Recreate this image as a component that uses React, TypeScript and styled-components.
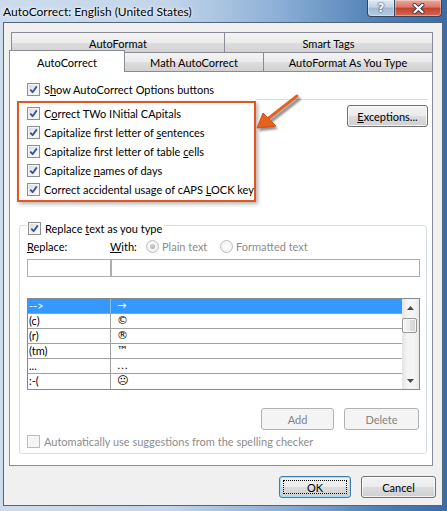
import React from "react";
import styled, { createGlobalStyle } from "styled-components";

const Global = createGlobalStyle`
  html, body { margin: 0; padding: 0; }
  body {
    width: 447px;
    height: 511px;
    overflow: hidden;
    font-family: Lato, "Liberation Sans", sans-serif;
    font-size: 11px;
    color: #000;
  }
`;

const Window = styled.div`
  width: 447px;
  height: 511px;
  box-sizing: border-box;
  display: flex;
  flex-direction: column;
  background: linear-gradient(to right, #cddced 0%, #c2d5ea 38%, #8db0d6 62%, #4d7db3 86%, #3c6ca6 100%);
`;

const TitleBar = styled.div`
  height: 22px;
  flex: none;
  display: flex;
  align-items: flex-start;
`;

const TitleText = styled.div`
  padding: 4px 0 0 3px;
  font-size: 12px;
  line-height: 16px;
  text-shadow: 0 0 5px rgba(255, 255, 255, 0.95), 0 0 2px rgba(255, 255, 255, 0.9);
`;

const CaptionGroup = styled.div`
  margin-left: auto;
  margin-right: 5px;
  display: flex;
`;

const CaptionButton = styled.div<{ $kind: "help" | "close" }>`
  height: 17px;
  width: ${(p) => (p.$kind === "help" ? 28 : 47)}px;
  box-sizing: border-box;
  border: 1px solid #34465e;
  border-top: none;
  border-left: ${(p) => (p.$kind === "help" ? "1px solid #34465e" : "none")};
  border-radius: ${(p) => (p.$kind === "help" ? "0 0 0 4px" : "0 0 4px 0")};
  background: ${(p) =>
    p.$kind === "help"
      ? "linear-gradient(#dfe8f2, #c1d2e5 45%, #a2bad5 50%, #b4cbe3)"
      : "linear-gradient(#eaa898, #d8776a 45%, #c3402c 50%, #d26a50)"};
  box-shadow: inset 0 0 0 1px rgba(255, 255, 255, 0.35);
  display: flex;
  align-items: center;
  justify-content: center;
  color: #fff;
  font-family: "DejaVu Sans", sans-serif;
  font-weight: bold;
  font-size: 12px;
  text-shadow: 0 0 2px #2c3e57, 0 0 1px #2c3e57;
`;

const Client = styled.div`
  flex: 1;
  margin: 0 4px 5px 3px;
  border: 1px solid #51667d;
  background: #f0f0f0;
  padding: 9px 9px 0 5px;
  display: flex;
  flex-direction: column;
`;

const TabRow = styled.div<{ $indent: number; $h: number }>`
  display: flex;
  height: ${(p) => p.$h}px;
  padding-left: ${(p) => p.$indent}px;
`;

const Tab = styled.div<{ $w: number; $active?: boolean }>`
  width: ${(p) => p.$w}px;
  flex: none;
  box-sizing: border-box;
  border: 1px solid #898c95;
  border-bottom: none;
  background: ${(p) =>
    p.$active ? "#fff" : "linear-gradient(#f3f3f3, #ebebeb 50%, #dedede 50%, #d2d2d2)"};
  display: flex;
  align-items: center;
  justify-content: center;
  padding-top: 1px;
  position: relative;
  z-index: ${(p) => (p.$active ? 1 : 0)};
  height: ${(p) => (p.$active ? "22px" : "auto")};
  margin-top: ${(p) => (p.$active ? "-2px" : "0")};
  & + & {
    margin-left: -1px;
  }
`;

const Panel = styled.div`
  position: relative;
  border: 1px solid #898c95;
  background: #fff;
  padding-bottom: 11px;
  display: flex;
  flex-direction: column;
`;

const CheckRow = styled.div<{ $muted?: boolean }>`
  display: flex;
  align-items: center;
  gap: 4px;
  height: 19px;
  color: ${(p) => (p.$muted ? "#8d8d8d" : "#000")};
  white-space: nowrap;
`;

const ShowRow = styled(CheckRow)`
  margin: 8px 0 0 17px;
`;

const Key = styled.span`
  text-decoration: underline;
`;

const Box = styled.span<{ $disabled?: boolean }>`
  width: 13px;
  height: 13px;
  flex: none;
  box-sizing: border-box;
  border: 1px solid ${(p) => (p.$disabled ? "#bcbcbc" : "#8e8f8f")};
  background: ${(p) =>
    p.$disabled ? "#f4f4f4" : "linear-gradient(135deg, #d3d6db, #f2f3f5 60%, #ffffff)"};
  box-shadow: inset 0 0 0 1px ${(p) => (p.$disabled ? "#f7f7f7" : "#f4f4f4")};
  display: flex;
  align-items: center;
  justify-content: center;
`;

const Check = ({ on = true, disabled = false }: { on?: boolean; disabled?: boolean }) => (
  <Box $disabled={disabled}>
    {on && (
      <svg width="9" height="9" viewBox="0 0 9 9">
        <path d="M1.3 4.6 L3.6 7.2 L7.8 1.4" fill="none" stroke="#34549a" strokeWidth="1.8" strokeLinejoin="round" />
      </svg>
    )}
  </Box>
);

const Section = styled.div`
  display: flex;
  margin-left: 7px;
`;

const Highlight = styled.div`
  width: 239px;
  flex: none;
  box-sizing: border-box;
  margin-top: 2px;
  border: 2px solid #e2561f;
  box-shadow: 2px 2px 4px rgba(0, 0, 0, 0.3);
  padding: 1px 0 1px 8px;
`;

const SideColumn = styled.div`
  flex: 1;
  margin-right: 4px;
  border-top: 1px solid #d5dfe5;
  padding-top: 5px;
  display: flex;
  justify-content: flex-end;
  align-items: flex-start;
`;

const Button = styled.button<{ $w: number; $disabled?: boolean; $default?: boolean }>`
  width: ${(p) => p.$w}px;
  height: 22px;
  flex: none;
  padding: 0;
  font-family: inherit;
  font-size: 11px;
  border-radius: 3px;
  border: 1px solid ${(p) => (p.$disabled ? "#adb2b5" : p.$default ? "#3c7fb1" : "#707070")};
  color: ${(p) => (p.$disabled ? "#838383" : "#000")};
  background: ${(p) =>
    p.$disabled ? "#f4f4f4" : "linear-gradient(#f2f2f2, #ebebeb 50%, #dddddd 50%, #cfcfcf)"};
  box-shadow: ${(p) =>
    p.$disabled
      ? "none"
      : p.$default
      ? "inset 0 0 0 1px #a9dcf6"
      : "inset 0 0 0 1px rgba(255,255,255,0.75)"};
  display: flex;
  align-items: center;
  justify-content: center;
  position: relative;
`;

const FocusRing = styled.span`
  position: absolute;
  inset: 3px;
  border: 1px dotted #000;
`;

const Group = styled.fieldset`
  margin: 14px 5px 0 9px;
  padding: 0 6px 2px 7px;
  border: 1px solid #d5dfe5;
  border-radius: 3px;
  min-width: 0;
`;

const Legend = styled.legend`
  padding: 6px 2px 0 1px;
  margin: 0;
`;

const LegendInner = styled(CheckRow)`
  height: 13px;
`;

const LabelRow = styled.div`
  display: flex;
  align-items: center;
  height: 19px;
  margin-top: 2px;
  white-space: nowrap;
`;

const Label = styled.span<{ $w?: number; $muted?: boolean }>`
  width: ${(p) => (p.$w ? `${p.$w}px` : "auto")};
  flex: none;
  color: ${(p) => (p.$muted ? "#8d8d8d" : "#000")};
`;

const RadioDot = styled.span<{ $on?: boolean }>`
  width: 13px;
  height: 13px;
  flex: none;
  box-sizing: border-box;
  border-radius: 50%;
  border: 1px solid #bcbcbc;
  background: radial-gradient(circle at 50% 50%, #fff 0%, #ececec 100%);
  display: flex;
  align-items: center;
  justify-content: center;
  margin-right: 3px;
  &::after {
    content: "";
    width: 5px;
    height: 5px;
    border-radius: 50%;
    background: ${(p) => (p.$on ? "radial-gradient(circle at 40% 35%, #d6d6d6, #a3a3a3)" : "transparent")};
  }
`;

const InputRow = styled.div`
  display: flex;
  margin-top: 3px;
  height: 18px;
`;

const TextBox = styled.div<{ $w?: number }>`
  width: ${(p) => (p.$w ? `${p.$w}px` : "auto")};
  flex: ${(p) => (p.$w ? "none" : "1")};
  box-sizing: border-box;
  border: 1px solid #abadb3;
  background: #fff;
`;

const ListBox = styled.div`
  margin-top: 21px;
  height: 92px;
  box-sizing: border-box;
  border: 1px solid #828790;
  background: #fff;
  display: flex;
`;

const Rows = styled.div`
  flex: 1;
  display: flex;
  flex-direction: column;
`;

const Row = styled.div<{ $sel?: boolean }>`
  display: grid;
  grid-template-columns: 83px 1fr;
  height: 15px;
  flex: none;
  box-sizing: border-box;
  border-bottom: 1px solid #a0a0a0;
  background: ${(p) => (p.$sel ? "#3399ff" : "transparent")};
  color: ${(p) => (p.$sel ? "#fff" : "#000")};
  line-height: 14px;
  &:last-child {
    border-bottom: none;
  }
`;

const KeyCell = styled.div<{ $sel?: boolean }>`
  border-right: 1px solid ${(p) => (p.$sel ? "#86bff5" : "#a0a0a0")};
  padding-left: 1px;
  white-space: nowrap;
`;

const ValueCell = styled.div`
  padding-left: 6px;
  font-family: "DejaVu Sans", sans-serif;
  font-size: 11px;
  white-space: nowrap;
`;

const ScrollBar = styled.div`
  width: 17px;
  flex: none;
  display: flex;
  flex-direction: column;
  background: linear-gradient(to right, #e4e4e4, #f4f4f4 35%, #f4f4f4 70%, #e8e8e8);
`;

const ScrollArrow = styled.div`
  height: 17px;
  flex: none;
  display: flex;
  align-items: center;
  justify-content: center;
`;

const Thumb = styled.div`
  height: 15px;
  width: 15px;
  margin-top: 2px;
  box-sizing: border-box;
  border: 1px solid #979797;
  border-radius: 2px;
  background: linear-gradient(to right, #f6f6f6, #ececec 50%, #dedede 50%, #d3d3d3);
  box-shadow: inset 0 0 0 1px rgba(255, 255, 255, 0.8);
`;

const Spacer = styled.div`
  flex: 1;
`;

const ActionRow = styled.div`
  display: flex;
  justify-content: flex-end;
  gap: 10px;
  margin: 18px 1px 0 0;
`;

const AutoRow = styled(CheckRow)`
  margin-top: 2px;
`;

const Footer = styled.div`
  display: flex;
  justify-content: flex-end;
  gap: 10px;
  margin: 10px -3px 0 0;
`;

const Pointer = styled.svg`
  position: absolute;
  left: 240px;
  top: 18px;
  overflow: visible;
`;

const corrections: React.ReactNode[] = [
  <>C<Key>o</Key>rrect TWo INitial CApitals</>,
  <>Capitalize first letter of <Key>s</Key>entences</>,
  <>Capitalize first letter of table <Key>c</Key>ells</>,
  <>Capitalize <Key>n</Key>ames of days</>,
  <>Correct accidental usage of cAPS <Key>L</Key>OCK key</>,
];

const entries = [
  { from: "-->", to: "\u2192" },
  { from: "(c)", to: "\u00a9" },
  { from: "(r)", to: "\u00ae" },
  { from: "(tm)", to: "\u2122" },
  { from: "...", to: "\u2026" },
  { from: ":-(", to: "\u2639" },
];

const Triangle = ({ up }: { up?: boolean }) => (
  <svg width="7" height="4" viewBox="0 0 7 4">
    <path d={up ? "M0 4 L3.5 0 L7 4 Z" : "M0 0 L3.5 4 L7 0 Z"} fill="#4a4a4a" />
  </svg>
);

export default function App() {
  return (
    <>
      <Global />
      <Window>
        <TitleBar>
          <TitleText>AutoCorrect: English (United States)</TitleText>
          <CaptionGroup>
            <CaptionButton $kind="help">?</CaptionButton>
            <CaptionButton $kind="close">
              <svg width="13" height="11" viewBox="0 0 13 11">
                <path d="M2.5 1.8 L10.5 9.2 M10.5 1.8 L2.5 9.2" stroke="#2f3f55" strokeWidth="4" strokeLinecap="round" />
                <path d="M2.5 1.8 L10.5 9.2 M10.5 1.8 L2.5 9.2" stroke="#fff" strokeWidth="2.2" strokeLinecap="round" />
              </svg>
            </CaptionButton>
          </CaptionGroup>
        </TitleBar>

        <Client>
          <TabRow $indent={2} $h={20}>
            <Tab $w={214}>AutoFormat</Tab>
            <Tab $w={209}>Smart Tags</Tab>
          </TabRow>
          <TabRow $indent={0} $h={19}>
            <Tab $w={116} $active>AutoCorrect</Tab>
            <Tab $w={140}>Math AutoCorrect</Tab>
            <Tab $w={170}>AutoFormat As You Type</Tab>
          </TabRow>

          <Panel>
            <ShowRow>
              <Check />
              <span>S<Key>h</Key>ow AutoCorrect Options buttons</span>
            </ShowRow>

            <Section>
              <Highlight>
                {corrections.map((label, i) => (
                  <CheckRow key={i}>
                    <Check />
                    <span>{label}</span>
                  </CheckRow>
                ))}
              </Highlight>
              <SideColumn>
                <Button $w={81}>
                  <span><Key>E</Key>xceptions...</span>
                </Button>
              </SideColumn>
            </Section>

            <Group>
              <Legend>
                <LegendInner>
                  <Check />
                  <span>Replace <Key>t</Key>ext as you type</span>
                </LegendInner>
              </Legend>

              <LabelRow>
                <Label $w={83}><Key>R</Key>eplace:</Label>
                <Label $w={36}><Key>W</Key>ith:</Label>
                <RadioDot $on />
                <Label $w={58} $muted>Plain text</Label>
                <RadioDot />
                <Label $muted>Formatted text</Label>
              </LabelRow>

              <InputRow>
                <TextBox $w={84} />
                <TextBox />
              </InputRow>

              <ListBox>
                <Rows>
                  {entries.map((e, i) => (
                    <Row key={e.from} $sel={i === 0}>
                      <KeyCell $sel={i === 0}>{e.from}</KeyCell>
                      <ValueCell>{e.to}</ValueCell>
                    </Row>
                  ))}
                </Rows>
                <ScrollBar>
                  <ScrollArrow>
                    <Triangle up />
                  </ScrollArrow>
                  <Thumb />
                  <Spacer />
                  <ScrollArrow>
                    <Triangle />
                  </ScrollArrow>
                </ScrollBar>
              </ListBox>

              <ActionRow>
                <Button $w={73} $disabled>Add</Button>
                <Button $w={75} $disabled>Delete</Button>
              </ActionRow>

              <AutoRow $muted>
                <Check on={false} disabled />
                <span>Automatically use suggestions from the spelling checker</span>
              </AutoRow>
            </Group>

            <Pointer width="52" height="42" viewBox="0 0 52 42">
              <defs>
                <filter id="soft" x="-30%" y="-30%" width="160%" height="160%">
                  <feGaussianBlur stdDeviation="1.2" />
                </filter>
              </defs>
              <g transform="translate(2 3)" filter="url(#soft)" opacity="0.45">
                <path d="M47 6 L15 31" stroke="#000" strokeWidth="3.5" strokeLinecap="round" />
                <path d="M7 38 L13 23 L26 36 Z" fill="#000" />
              </g>
              <path d="M47 6 L15 31" stroke="#e4611f" strokeWidth="3" strokeLinecap="round" />
              <path d="M7 38 L13 23 L26 36 Z" fill="#e4611f" stroke="#d0521a" strokeWidth="1" strokeLinejoin="round" />
            </Pointer>
          </Panel>

          <Footer>
            <Button $w={72} $default>
              <FocusRing />
              OK
            </Button>
            <Button $w={75}>Cancel</Button>
          </Footer>
        </Client>
      </Window>
    </>
  );
}
